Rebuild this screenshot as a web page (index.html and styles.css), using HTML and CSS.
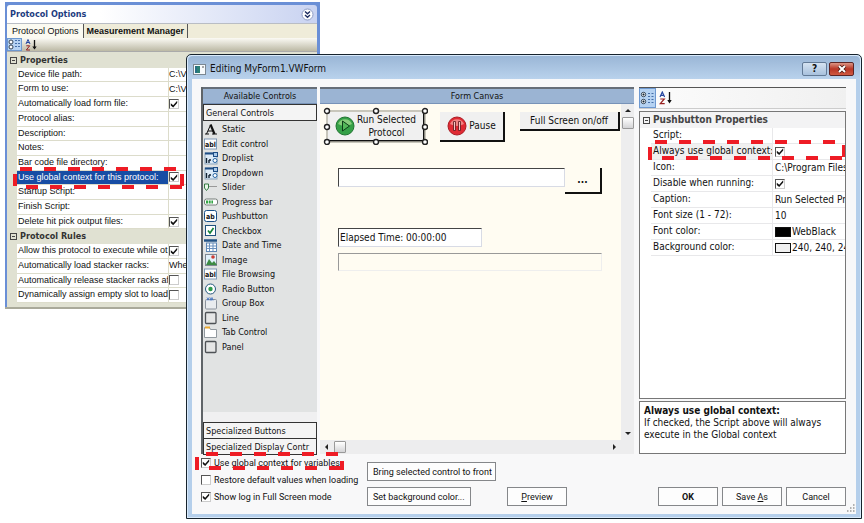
FILE: index.html
```html
<!DOCTYPE html>
<html lang="en">
<head>
<meta charset="utf-8">
<title>Editing MyForm1.VWForm</title>
<link rel="stylesheet" href="styles.css">
</head>
<body>
<main class="desktop">
  <section class="panel">
    <header class="panel-head">
      <h2>Protocol Options</h2>
      <button class="collapse" aria-label="Collapse"><svg width="13" height="13" viewBox="0 0 13 13"><circle cx="6.5" cy="6.5" r="5.5" fill="#fff" stroke="#8d9cc4"/><path d="M4 3.500l2.500 2.200 2.500-2.200M4 7l2.500 2.200 2.500-2.200" fill="none" stroke="#1c2c60" stroke-width="1.400"/></svg></button>
    </header>
    <nav class="tabs">
      <button class="tab active">Protocol Options</button>
      <button class="tab">Measurement Manager</button>
    </nav>
    <div class="tools olive">
      <button class="tool on" aria-label="Categorized"><svg width="13" height="11" viewBox="0 0 13 11"><circle cx="3" cy="3" r="2" fill="#fff" stroke="#345"/><circle cx="3" cy="8" r="2" fill="#fff" stroke="#345"/><path d="M7 1.500h2M7 4.500h2M7 7.500h2M10 1.500h2M10 4.500h2M10 7.500h2" stroke="#456fa8"/></svg></button>
      <button class="tool" aria-label="Sort alphabetically"><svg width="13" height="12" viewBox="0 0 13 12"><path d="M1 5l2-4.500L5 5M1.800 3.500h2.400" fill="none" stroke="#2546a0"/><path d="M1.300 6.800h3.400L1.300 11h3.700" fill="none" stroke="#982020"/><path d="M9.500 1v8" stroke="#111" stroke-width="1.300"/><path d="M7.300 7.500h4.400L9.500 10.500z" fill="#111"/></svg></button>
    </div>
    <div class="props olive-props">
      <h3><span class="minus"></span>Properties</h3>
      <div class="row"><label for="p1">Device file path:</label><input id="p1" type="text" value="C:\VWorks"></div>
      <div class="row"><label for="p2">Form to use:</label><input id="p2" type="text" value="C:\VWorks"></div>
      <div class="row"><label for="p3">Automatically load form file:</label><input id="p3" type="checkbox" checked></div>
      <div class="row"><label for="p4">Protocol alias:</label><input id="p4" type="text"></div>
      <div class="row"><label for="p5">Description:</label><input id="p5" type="text"></div>
      <div class="row"><label for="p6">Notes:</label><input id="p6" type="text"></div>
      <div class="row"><label for="p7">Bar code file directory:</label><input id="p7" type="text"></div>
      <div class="row selected"><label for="p8">Use global context for this protocol:</label><input id="p8" type="checkbox" checked>
        <svg class="mark mark-protocol" width="171" height="22"><path d="M7 2H171" stroke-dasharray="12 12"/><path d="M13 20H171" stroke-dasharray="12 12"/><path d="M2 7V19M169 7V19"/></svg>
      </div>
      <div class="row"><label for="p9">Startup Script:</label><input id="p9" type="text"></div>
      <div class="row"><label for="p10">Finish Script:</label><input id="p10" type="text"></div>
      <div class="row"><label for="p11">Delete hit pick output files:</label><input id="p11" type="checkbox" checked></div>
      <h3><span class="minus"></span>Protocol Rules</h3>
      <div class="row"><label for="p12">Allow this protocol to execute while ot</label><input id="p12" type="checkbox" checked></div>
      <div class="row"><label for="p13">Automatically load stacker racks:</label><input id="p13" type="text" value="When needed"></div>
      <div class="row"><label for="p14">Automatically release stacker racks aft</label><input id="p14" type="checkbox"></div>
      <div class="row"><label for="p15">Dynamically assign empty slot to load</label><input id="p15" type="checkbox"></div>
    </div>
  </section>

  <section class="window">
    <header class="titlebar">
      <svg width="13" height="11" viewBox="0 0 13 11"><rect x=".5" y=".5" width="12" height="10" fill="#f7fafc" stroke="#7b8791"/><rect x="2" y="2" width="5" height="7" fill="#2b8175"/><path d="M3 2v7" stroke="#245a94"/><path d="M9 3h2" stroke="#555"/></svg>
      <h1>Editing MyForm1.VWForm</h1>
      <button class="sys help" aria-label="Help">?</button>
      <button class="sys close" aria-label="Close"><svg width="10" height="8" viewBox="0 0 10 8"><path d="M2 1l6 6M8 1L2 7" stroke="#4a1a14" stroke-width="3.600"/><path d="M2 1l6 6M8 1L2 7" stroke="#fff" stroke-width="2"/></svg></button>
    </header>
    <div class="client">
      <div class="work">
        <aside class="palette">
          <h2 class="bar">Available Controls</h2>
          <button class="group">General Controls</button>
          <ul class="controls">
            <li><svg viewBox="0 0 14 14"><path d="M2.500 12L6.500 3M4 9h5M1 12h4M8 12h5" fill="none" stroke="#111"/><path d="M6.500 2.500l4 9.500" stroke="#111" stroke-width="2.200"/></svg>Static</li>
            <li><svg viewBox="0 0 14 14"><rect x=".5" y="2" width="12" height="10" fill="#fff" stroke="#8099b7"/><text x="1" y="10">abl</text></svg>Edit control</li>
            <li><svg viewBox="0 0 14 14"><rect x="1" y="2" width="12" height="11" fill="#dceaf7" stroke="#8ba5bc"/><path d="M1 2.500h9" stroke="#1c4c84" stroke-width="2"/><rect x="9.500" y="1.500" width="4" height="4" fill="#a9caea" stroke="#1c4c84"/><circle cx="11" cy="9.500" r="2" fill="#fff" stroke="#2465a4"/><path d="M2.500 7v5M5 9v3M5 9h2" stroke="#123" stroke-width="1.400"/></svg>Droplist</li>
            <li><svg viewBox="0 0 14 14"><rect x="1" y="2" width="12" height="11" fill="#dceaf7" stroke="#8ba5bc"/><path d="M1 2.500h9" stroke="#1c4c84" stroke-width="2"/><rect x="9.500" y="1.500" width="4" height="4" fill="#a9caea" stroke="#1c4c84"/><circle cx="11" cy="9.500" r="2" fill="#fff" stroke="#2465a4"/><path d="M2.500 7v5M5 9v3M5 9h2" stroke="#123" stroke-width="1.400"/></svg>Dropdown</li>
            <li><svg viewBox="0 0 14 14"><path d="M.5 4h4v4l-2 2.500-2-2.500z" fill="#e9f7e9" stroke="#327840"/><path d="M5 6.500h8" stroke="#999"/></svg>Slider</li>
            <li><svg viewBox="0 0 14 14"><rect x=".5" y="4" width="13" height="6" rx="2" fill="#fff" stroke="#747d78"/><path d="M2 7h7" stroke="#32a443" stroke-width="3" stroke-dasharray="2 .7"/></svg>Progress bar</li>
            <li><svg viewBox="0 0 14 14"><rect x=".5" y="1.500" width="12" height="11" rx="2" fill="#fff" stroke="#194f86"/><text x="2" y="10">ab</text></svg>Pushbutton</li>
            <li><svg viewBox="0 0 14 14"><rect x="1.500" y="1.500" width="10" height="10" fill="#fff" stroke="#20527e"/><path d="M4 6.500l2 2.500 3.500-5" fill="none" stroke="#16823b" stroke-width="1.700"/></svg>Checkbox</li>
            <li><svg viewBox="0 0 14 14"><path d="M0 2.500h13" stroke="#235386" stroke-width="2.500"/><rect x="2.500" y="5" width="10" height="8.500" fill="#fff" stroke="#5e87b6"/><path d="M3 8h9M3 10.500h9M5.500 5v8M9 5v8" stroke="#6b91be"/></svg>Date and Time</li>
            <li><svg viewBox="0 0 14 14"><rect x="1.500" y="1.500" width="11" height="11" fill="#e2f1fb" stroke="#808994"/><path d="M2 12l3-6 3 4 2-2 3 4z" fill="#3d8b44"/><circle cx="9" cy="4" r="1.800" fill="#ce3d34"/></svg>Image</li>
            <li><svg viewBox="0 0 14 14"><rect x=".5" y="2" width="12" height="10" fill="#fff" stroke="#8099b7"/><text x="1" y="10">abl</text></svg>File Browsing</li>
            <li><svg viewBox="0 0 14 14"><circle cx="6.500" cy="7" r="5" fill="#fff" stroke="#24577e"/><circle cx="6.500" cy="7" r="2.200" fill="#2f9a4a"/></svg>Radio Button</li>
            <li><svg viewBox="0 0 14 14"><rect x="1.500" y="3.500" width="11" height="9.500" rx="1" fill="#e9ecef" stroke="#8a929c"/><path d="M3 1.500l2 3M5 1.500l-2 3M6 1.500l1 3 1-3 1 3" fill="none" stroke="#386cc2" stroke-width=".8"/></svg>Group Box</li>
            <li><svg viewBox="0 0 14 14"><rect x="1.500" y="1.500" width="10.500" height="11" rx="1" fill="#e5e6e6" stroke="#4e5256" stroke-width="1.300"/></svg>Line</li>
            <li><svg viewBox="0 0 14 14"><path d="M.5 12.500V2.500h5l1 2h6v8z" fill="#fff" stroke="#92999f"/><path d="M1 2.500h5" stroke="#eba92f" stroke-width="2"/></svg>Tab Control</li>
            <li><svg viewBox="0 0 14 14"><rect x="1.500" y="1.500" width="10.500" height="11" rx="1" fill="#e5e6e6" stroke="#4e5256" stroke-width="1.300"/></svg>Panel</li>
          </ul>
          <button class="group">Specialized Buttons</button>
          <button class="group">Specialized Display Contr</button>
        </aside>

        <section class="editor">
          <h2 class="bar">Form Canvas</h2>
          <div class="canvas">
            <button class="item raised run"><svg width="20" height="20" viewBox="0 0 20 20"><circle cx="10" cy="10" r="9" fill="#35a047" stroke="#207431"/><path d="M3 8a7.500 7.500 0 0 1 14 0q-7 4-14 0" fill="#87cc7b"/><path d="M7.500 5l7 5-7 5z" fill="#54b85a" stroke="#0d3e18"/></svg><span>Run Selected<br>Protocol</span></button>
            <svg class="item handles" width="105" height="38"><rect x="4" y="4" width="98" height="31" fill="none" stroke="#b7b4a9" stroke-width="1.500"/><g fill="#fff" stroke="#222" stroke-width="1.400"><circle cx="4" cy="4" r="2.500"/><circle cx="53" cy="4" r="2.500"/><circle cx="102" cy="4" r="2.500"/><circle cx="4" cy="20" r="2.500"/><circle cx="102" cy="20" r="2.500"/><circle cx="4" cy="35" r="2.500"/><circle cx="53" cy="35" r="2.500"/><circle cx="102" cy="35" r="2.500"/></g></svg>
            <button class="item raised pause"><svg width="20" height="20" viewBox="0 0 20 20"><circle cx="10" cy="10" r="9" fill="#e02a33" stroke="#ab1c24"/><path d="M3 8a7.500 7.500 0 0 1 14 0q-7 4-14 0" fill="#f08483"/><path d="M6.500 5.500h2v9h-2zM11.500 5.500h2v9h-2z" fill="#f8c5c2" stroke="#5d1015" stroke-width=".8"/></svg>Pause</button>
            <button class="item raised full">Full Screen on/off</button>
            <input class="item sunken path" type="text" aria-label="File path">
            <button class="item raised browse">...</button>
            <input class="item sunken elapsed" type="text" value="Elapsed Time: 00:00:00" aria-label="Elapsed time">
            <div class="item progress" role="progressbar" aria-label="Progress"></div>
          </div>
          <div class="vscroll"><i class="arrow up"></i><i class="thumb"></i><i class="arrow down"></i></div>
          <div class="hscroll"><i class="arrow left"></i><i class="thumb"></i><i class="arrow right"></i></div>
        </section>

        <aside class="inspector">
          <div class="tools">
            <button class="tool on" aria-label="Categorized"><svg width="15" height="14" viewBox="0 0 15 14"><circle cx="3.500" cy="3.500" r="2.200" fill="#fff" stroke="#345"/><circle cx="3.500" cy="10.500" r="2.200" fill="#fff" stroke="#345"/><path d="M2.500 3.500h2M3.500 2.500v2M2.500 10.500h2M3.500 9.500v2" stroke="#123"/><path d="M8 2.500h2M8 5.500h2M8 8.500h2M8 11.500h2M11.500 2.500h2M11.500 5.500h2M11.500 8.500h2M11.500 11.500h2" stroke="#456fa8"/></svg></button>
            <button class="tool" aria-label="Sort alphabetically"><svg width="14" height="14" viewBox="0 0 14 14"><path d="M1 6l2.300-5L5.600 6M1.900 4.300h2.800" fill="none" stroke="#2546a0" stroke-width="1.200"/><path d="M1.300 8h4L1.300 12.700h4.400" fill="none" stroke="#982020" stroke-width="1.200"/><path d="M10.500 1v10" stroke="#111" stroke-width="1.300"/><path d="M8.300 9h4.400l-2.200 3.500z" fill="#111"/></svg></button>
          </div>
          <div class="props">
            <h3><span class="minus"></span>Pushbutton Properties</h3>
            <div class="row"><label for="b1">Script:</label><input id="b1" type="text"></div>
            <div class="row current"><label for="b2">Always use global context:</label><input id="b2" type="checkbox" checked>
              <svg class="mark mark-context" width="198" height="20"><path d="M7 2H198" stroke-dasharray="12 12"/><path d="M14 18H198" stroke-dasharray="12 12"/><path d="M2 7V20M196 5V17"/></svg>
            </div>
            <div class="row"><label for="b3">Icon:</label><input id="b3" type="text" value="C:\Program Files"></div>
            <div class="row"><label for="b4">Disable when running:</label><input id="b4" type="checkbox" checked></div>
            <div class="row"><label for="b5">Caption:</label><input id="b5" type="text" value="Run Selected Protocol"></div>
            <div class="row"><label for="b6">Font size (1 - 72):</label><input id="b6" type="text" value="10"></div>
            <div class="row"><label for="b7">Font color:</label><span class="swatch black"></span><input id="b7" type="text" value="WebBlack"></div>
            <div class="row"><label for="b8">Background color:</label><span class="swatch"></span><input id="b8" type="text" value="240, 240, 240"></div>
          </div>
          <div class="about">
            <h4>Always use global context:</h4>
            <p>If checked, the Script above will always execute in the Global context</p>
          </div>
        </aside>
      </div>

      <footer class="actions">
        <div class="checks">
          <label><input type="checkbox" checked>Use global context for variables</label>
          <label><input type="checkbox">Restore default values when loading</label>
          <label><input type="checkbox" checked>Show log in Full Screen mode</label>
          <svg class="mark mark-variables" width="149" height="19"><path d="M11 2H146" stroke-dasharray="12 12"/><path d="M14 16H148" stroke-dasharray="12 12"/><path d="M2 5V18M147 9V18"/></svg>
        </div>
        <div class="edit-buttons">
          <button class="btn wide">Bring selected control to front</button>
          <button class="btn">Set background color...</button>
        </div>
        <button class="btn fixed preview"><u>P</u>review</button>
        <button class="btn fixed ok">OK</button>
        <button class="btn fixed">Save <u>A</u>s</button>
        <button class="btn fixed">Cancel</button>
      </footer>
      <svg class="grip" width="9" height="9" viewBox="0 0 9 9"><path d="M7 1h1.500M7 4h1.500M4 4h1.500M7 7h1.500M4 7h1.500M1 7h1.500" stroke="#999" stroke-width="1.500"/></svg>
    </div>
  </section>
</main>
</body>
</html>
```
FILE: styles.css
```css
* { box-sizing: border-box; }
body { margin: 0; background: #fff; color: #111; font: 10px/14px "DejaVu Sans Condensed", "Noto Sans", sans-serif; }
h1, h2, h3, h4, p, ul { margin: 0; padding: 0; font-size: inherit; }
button, input { font: inherit; color: inherit; margin: 0; padding: 0; border: 0; background: none; border-radius: 0; }
svg { flex: none; display: block; }
.desktop { position: relative; min-height: 100vh; overflow: hidden; }

/* Checkboxes */
input[type="checkbox"] { appearance: none; flex: none; width: 10px; height: 10px; background: #fff; border: 1px solid; border-color: #555 #ccc #ccc #555; }
input[type="checkbox"]:checked::before { content: ""; display: block; width: 8px; height: 8px; background: #111; clip-path: polygon(10% 40%, 40% 65%, 90% 10%, 90% 38%, 40% 95%, 10% 68%); }

/* Highlight outlines */
.mark { position: absolute; z-index: 2; pointer-events: none; overflow: visible; }
.mark path { fill: none; stroke: #ee1c25; stroke-width: 4px; }
.mark-protocol { left: -4px; top: -4px; }
.mark-context { left: -3px; top: -4px; }
.mark-variables { left: -6px; top: -2px; }

/* Protocol panel */
.panel { position: absolute; left: 5px; top: 2px; width: 315px; padding: 3px 3px 0 2px; background: #6a8fd6; border-bottom: 2px solid #a9a99a; font-family: "Liberation Sans", Arial, sans-serif; font-size: 9px; }
.panel h2, .panel h3 { font-family: "DejaVu Sans Condensed", "Noto Sans", sans-serif; font-size: 9px; }
.panel-head { display: flex; align-items: center; justify-content: space-between; height: 18px; padding: 0 3px; background: linear-gradient(90deg, #fff 30%, #c9d3f1); color: #1d3c80; border-radius: 3px 3px 0 0; }
.tabs { display: flex; align-items: stretch; height: 15px; background: #efecd9; border-top: 1px solid #b9bdc4; }
.tab { padding: 0 3px; border-right: 1px solid #555; font-weight: bold; }
.tab.active { padding: 0 4px 0 5px; background: #fbfaf1; font-weight: normal; }
.tools { display: flex; align-items: center; gap: 2px; height: 21px; background: linear-gradient(90deg, #fcfcfc, #f0f0f0); border-bottom: 1px solid #ccc; }
.tools.olive { height: 13px; background: linear-gradient(#fbfaf4, #bcb9a5); border: 0; }
.tool { display: grid; place-items: center; height: 100%; padding: 0 1px; }
.tool.on { background: #b5d2f2; outline: 1px solid #6d98d0; outline-offset: -1px; }

/* Property lists */
.props { background: #fff; overflow: hidden; }
.props h3 { display: flex; align-items: center; gap: 3px; height: 16px; padding-left: 3px; background: #f3f3f4; color: #444; }
.minus { width: 7px; height: 7px; border: 1px solid #444; background: linear-gradient(#444, #444) 1px 2px / 3px 1px no-repeat; }
.row { position: relative; display: grid; grid-template-columns: 121px auto 1fr; align-items: center; height: 16px; margin-left: 11px; border-bottom: 1px solid #e8e8ea; }
.row label { align-self: stretch; padding-left: 2px; overflow: hidden; white-space: nowrap; border-right: 1px solid #e8e8ea; }
.row input { margin-left: 2px; }
.row input[type="text"] { min-width: 0; width: 100%; height: 13px; grid-column: auto / span 2; }
.row .swatch + input[type="text"] { grid-column: 3; margin-left: 1px; }
.row.current label { background: #f0f0f0; }
.swatch { width: 16px; height: 10px; margin-left: 2px; border: 1px solid #111; background: #f0f0f0; }
.swatch.black { background: #000; }
.olive-props { display: grid; grid-auto-rows: 1fr; height: 256px; padding: 1px 0 4px; background: #e0e1d2; border-top: 1px solid #aaa; line-height: 13px; }
.olive-props h3 { background: #e0e1d2; height: auto; color: #333; }
.olive-props .row { height: auto; margin-left: 10px; background: #fff; grid-template-columns: 152px auto 1fr; border-color: #dcdccb; }
.olive-props .row label { padding-left: 1px; border-color: #dcdccb; }
.olive-props .row input { margin-left: 0; }
.olive-props .selected label { background: #174da4; color: #fff; }

/* Form editor window */
.window { position: absolute; left: 186px; right: 2px; top: 54px; bottom: 4px; display: flex; flex-direction: column; padding: 0 5px 4px; background: #b5cfeb; border: 1px solid #17232d; border-radius: 5px 5px 0 0; box-shadow: inset 0 0 0 1px #d9eafb; }
.titlebar { display: flex; align-items: center; gap: 4px; height: 23px; margin: 1px -4px 0; padding: 3px 8px 0 5px; background: linear-gradient(#9ab6d6, #b9d2ec); border-radius: 5px 5px 0 0; }
.titlebar h1 { flex: 1; font-weight: normal; }
.sys { display: grid; place-items: center; width: 25px; height: 14px; margin-right: -2px; border: 1px solid #627a96; border-radius: 2px; background: linear-gradient(#d5e3f1, #a8c1dd); font-weight: bold; line-height: 12px; }
.sys.close { background: linear-gradient(#dc9585, #b83525 50%, #d05a42); border-color: #5c2525; }
.client { position: relative; flex: 1; min-height: 0; display: flex; flex-direction: column; padding: 8px 10px 8px 9px; background: #f8f8f9; }
.work { flex: 1; min-height: 0; display: grid; grid-template-columns: 116px minmax(0, 1fr) 209px; gap: 3px; }
.bar { height: 17px; background: #9bb4d3; border-top: 2px solid #666e78; border-bottom: 1px solid #7893b8; text-align: center; font-size: 9px; font-weight: normal; line-height: 15px; }
.palette { display: flex; flex-direction: column; background: #e1e3e3; border-left: 2px solid #5f6468; min-height: 0; font-size: 9px; }
.group { flex: none; height: 17px; padding-left: 2px; text-align: left; background: #f4f4f4; border: 1px solid #333; overflow: hidden; white-space: nowrap; margin-bottom: -1px; }
.controls { flex: 1; min-height: 0; padding-top: 2px; list-style: none; display: grid; grid-template-rows: repeat(16, 1fr); padding-bottom: 58px; border-bottom: 10px solid #f0f0f1; }
.controls li { display: flex; align-items: center; gap: 4px; min-height: 0; padding-left: 1px; }
.controls svg { width: 14px; height: 14px; }
.controls text { font: bold 7px "DejaVu Sans Condensed", sans-serif; fill: #111; }

.editor { display: grid; grid-template: 17px minmax(0, 1fr) 14px / minmax(0, 1fr) 13px; }
.editor .bar { grid-column: 1 / 3; }
.canvas { position: relative; background: #fffcf2; }
.item { position: absolute; }
.raised { display: flex; align-items: center; justify-content: center; background: #f0f0f0; border: solid #111; border-width: 0 2px 2px 0; }
.run { left: 8px; top: 8px; width: 97px; height: 30px; gap: 2px; line-height: 13px; }
.handles { left: 3px; top: 3px; }
.pause { left: 120px; top: 8px; width: 65px; height: 30px; gap: 2px; }
.full { left: 200px; top: 8px; width: 100px; height: 19px; }
.sunken { background: #fff; border: 1px solid; border-color: #444 #d8dbe5 #d8dbe5 #444; }
.path { left: 18px; top: 64px; width: 227px; height: 19px; }
.browse { left: 245px; top: 64px; width: 37px; height: 26px; background: #fffcf2; font-weight: bold; }
.elapsed { left: 18px; top: 124px; width: 144px; height: 19px; padding-left: 1px; }
.progress { left: 18px; top: 149px; width: 264px; height: 18px; border: 1px solid; border-color: #999 #eee #eee #999; }
.vscroll, .hscroll { display: flex; align-items: center; background: #ededee; }
.vscroll { flex-direction: column; padding: 5px 0; gap: 5px; }
.hscroll { grid-column: 1 / 3; padding: 0 18px 0 5px; gap: 6px; }
.thumb { width: 12px; height: 12px; background: linear-gradient(#fff, #d4d4d6); border: 1px solid #999; border-radius: 1px; }
.arrow { width: 0; height: 0; border: 3px solid transparent; }
.up { border-top: 0; border-bottom-color: #222; }
.down { border-bottom: 0; border-top-color: #222; margin-top: auto; }
.left { border-left: 0; border-right-color: #222; }
.right { border-right: 0; border-left-color: #222; margin-left: auto; }

.inspector { display: flex; flex-direction: column; gap: 2px; margin-left: 2px; border-top: 1px solid #555; }
.inspector .props { flex: 1; border: 1px solid #777; }
.inspector .row { grid-template-columns: 122px auto 1fr; }
.about { height: 53px; padding: 2px 4px; background: #fff; border: 1px solid #777; line-height: 12px; }
.about h4 { line-height: 13px; }

.actions { display: flex; align-items: flex-end; gap: 4px; height: 52px; font-family: Roboto, "Liberation Sans", sans-serif; font-size: 9px; }
.checks { position: relative; align-self: stretch; display: grid; grid-auto-rows: 17px; width: 162px; }
.checks label { display: flex; align-items: center; gap: 3px; white-space: nowrap; }
.edit-buttons { display: grid; justify-items: start; gap: 6px; width: 136px; }
.btn { height: 19px; padding: 0 5px; background: #fdfdfd; border: 1px solid #85878a; white-space: nowrap; }
.btn.wide { width: 129px; }
.btn.fixed { width: 60px; padding: 0; }
.btn.ok { margin-left: auto; font-weight: bold; }
.grip { position: absolute; right: 1px; bottom: 1px; }
```
